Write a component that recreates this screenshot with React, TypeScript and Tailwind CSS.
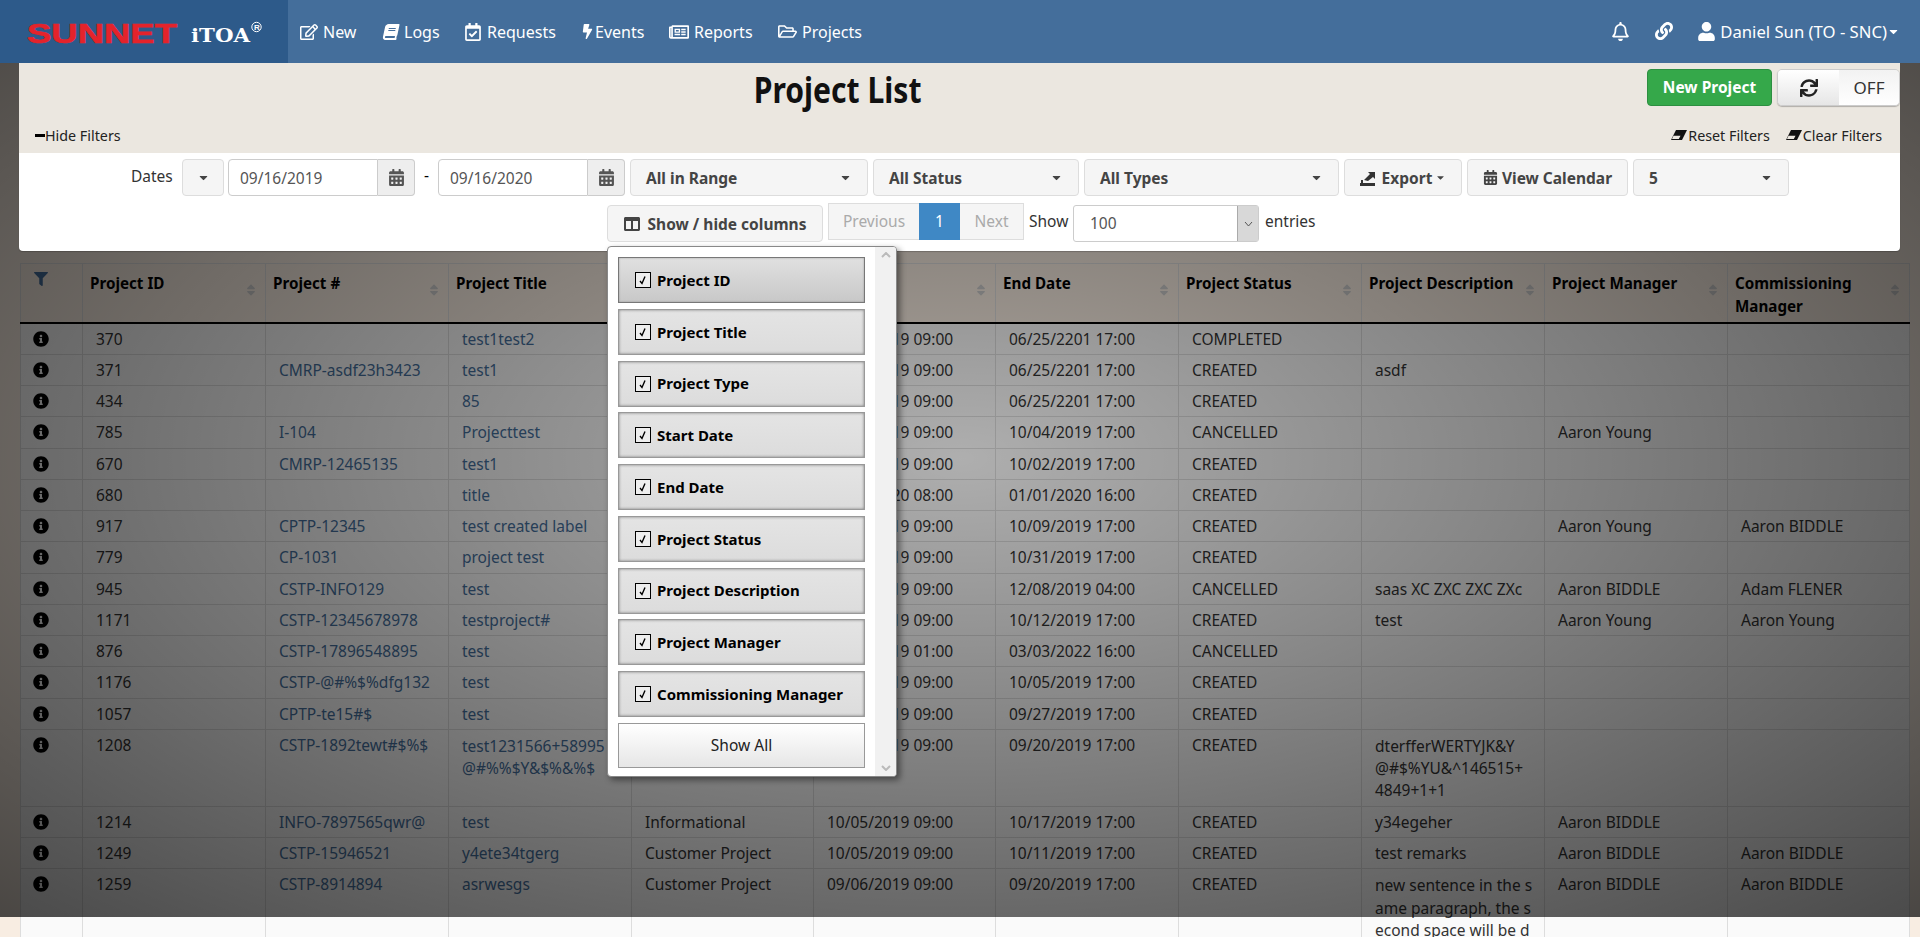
import React from 'react';
import {
  FaBolt, FaBook, FaCalendarAlt, FaCaretDown, FaColumns, FaFilter, FaInfoCircle, FaLink,
  FaRegBell, FaRegCalendarCheck, FaRegEdit, FaRegFolderOpen, FaRegNewspaper, FaSort, FaSync, FaUser,
} from 'react-icons/fa';

const navItems = [
  { label: 'New', width: 'w-[83px]', box: 'w-[23px]', icon: <FaRegEdit className="text-[18px]" /> },
  { label: 'Logs', width: 'w-[81px]', box: 'w-[21px]', icon: <FaBook className="text-[16px] -skew-x-12" /> },
  { label: 'Requests', width: 'w-[116px]', box: 'w-[23px]', icon: <FaRegCalendarCheck className="text-[18px]" /> },
  { label: 'Events', width: 'w-[89px]', box: 'w-[15px]', icon: <FaBolt className="text-[15px]" /> },
  { label: 'Reports', width: 'w-[109px]', box: 'w-[25px]', icon: <FaRegNewspaper className="text-[20px]" /> },
  { label: 'Projects', width: 'w-[90px]', box: 'w-[24px]', icon: <FaRegFolderOpen className="text-[19px]" /> },
];

const columns = [
  'Project ID',
  'Project Title',
  'Project Type',
  'Start Date',
  'End Date',
  'Project Status',
  'Project Description',
  'Project Manager',
  'Commissioning Manager',
];

const headers = ['Project ID', 'Project #', 'Project Title', 'Project Type', 'Start Date', 'End Date', 'Project Status', 'Project Description', 'Project Manager', 'Commissioning Manager'];
const colWidths = ['w-[62px]', 'w-[183px]', 'w-[183px]', 'w-[183px]', 'w-[182px]', 'w-[182px]', 'w-[183px]', 'w-[183px]', 'w-[183px]', 'w-[183px]', 'w-[182px]'];

// id, number, title, type, start, end, status, description, manager, commissioning
const rows = [
  ['370', '', 'test1test2', 'Customer Project', '10/05/2019 09:00', '06/25/2201 17:00', 'COMPLETED', '', '', ''],
  ['371', 'CMRP-asdf23h3423', 'test1', 'Customer Project', '10/05/2019 09:00', '06/25/2201 17:00', 'CREATED', 'asdf', '', ''],
  ['434', '', '85', 'Customer Project', '10/05/2019 09:00', '06/25/2201 17:00', 'CREATED', '', '', ''],
  ['785', 'I-104', 'Projecttest', 'Customer Project', '10/03/2019 09:00', '10/04/2019 17:00', 'CANCELLED', '', 'Aaron Young', ''],
  ['670', 'CMRP-12465135', 'test1', 'Customer Project', '10/01/2019 09:00', '10/02/2019 17:00', 'CREATED', '', '', ''],
  ['680', '', 'title', 'Customer Project', '01/01/2020 08:00', '01/01/2020 16:00', 'CREATED', '', '', ''],
  ['917', 'CPTP-12345', 'test created label', 'Customer Project', '10/05/2019 09:00', '10/09/2019 17:00', 'CREATED', '', 'Aaron Young', 'Aaron BIDDLE'],
  ['779', 'CP-1031', 'project test', 'Customer Project', '10/05/2019 09:00', '10/31/2019 17:00', 'CREATED', '', '', ''],
  ['945', 'CSTP-INFO129', 'test', 'Customer Project', '10/05/2019 09:00', '12/08/2019 04:00', 'CANCELLED', 'saas XC ZXC ZXC ZXc', 'Aaron BIDDLE', 'Adam FLENER'],
  ['1171', 'CSTP-12345678978', 'testproject#', 'Customer Project', '10/05/2019 09:00', '10/12/2019 17:00', 'CREATED', 'test', 'Aaron Young', 'Aaron Young'],
  ['876', 'CSTP-17896548895', 'test', 'Customer Project', '10/05/2019 01:00', '03/03/2022 16:00', 'CANCELLED', '', '', ''],
  ['1176', 'CSTP-@#%$%dfg132', 'test', 'Customer Project', '10/05/2019 09:00', '10/05/2019 17:00', 'CREATED', '', '', ''],
  ['1057', 'CPTP-te15#$', 'test', 'Customer Project', '09/05/2019 09:00', '09/27/2019 17:00', 'CREATED', '', '', ''],
  ['1208', 'CSTP-1892tewt#$%$', 'test1231566+58995\n@#%%$Y&$%&%$', 'Customer Project', '09/06/2019 09:00', '09/20/2019 17:00', 'CREATED', 'dterfferWERTYJK&Y\n@#$%YU&^146515+\n4849+1+1', '', ''],
  ['1214', 'INFO-7897565qwr@', 'test', 'Informational', '10/05/2019 09:00', '10/17/2019 17:00', 'CREATED', 'y34egeher', 'Aaron BIDDLE', ''],
  ['1249', 'CSTP-15946521', 'y4ete34tgerg', 'Customer Project', '10/05/2019 09:00', '10/11/2019 17:00', 'CREATED', 'test remarks', 'Aaron BIDDLE', 'Aaron BIDDLE'],
  ['1259', 'CSTP-8914894', 'asrwesgs', 'Customer Project', '09/06/2019 09:00', '09/20/2019 17:00', 'CREATED', 'new sentence in the s\name paragraph, the s\necond space will be d', 'Aaron BIDDLE', 'Aaron BIDDLE'],
];

const Logo = () => (
  <svg width="288" height="63" viewBox="0 0 288 63">
    <text x="27" y="43" textLength="150" lengthAdjust="spacingAndGlyphs" fontFamily="'Liberation Sans', sans-serif" fontWeight="700" fontSize="27" fill="#e4232b" stroke="#e4232b" strokeWidth="0.6">
      SUNNET
    </text>
    <text x="191" y="42" textLength="59" lengthAdjust="spacingAndGlyphs" fontFamily="'DejaVu Serif', serif" fontWeight="700" fontSize="19" fill="#ffffff">
      iTOA
    </text>
    <circle cx="256.5" cy="27" r="4.7" fill="none" stroke="#ffffff" strokeWidth="1" />
    <text x="254" y="30" fontFamily="'Liberation Sans', sans-serif" fontWeight="700" fontSize="8" fill="#ffffff">
      R
    </text>
  </svg>
);

const ExportIcon = () => (
  <svg width="16" height="17" viewBox="0 0 16 17" fill="#333">
    <path d="M0 14h15v3H0z" />
    <path d="M1 11h2v3H1z" />
    <path d="M4 11l6-6-2-2h7v7l-2-2-5 4z" />
  </svg>
);

const EraserIcon = () => (
  <svg width="16" height="10" viewBox="0 0 16 10" className="shrink-0">
    <path d="M5 0h11l-5 10H0z" fill="#111" />
    <path d="M2.500 5.800h7L7.800 9H1z" fill="#ebe7e0" />
  </svg>
);

const SelectButton = ({ label, className }: { label: string; className: string }) => (
  <div className={`h-[37px] flex items-center justify-between pl-[15px] pr-[15px] bg-[#f5f5f5] border border-[#ddd] rounded-[4px] font-bold text-[#444] ${className}`}>
    <span className="pt-[2px]">{label}</span>
    <FaCaretDown className="text-[13px] text-[#444]" />
  </div>
);

const DateInput = ({ value }: { value: string }) => (
  <div className="flex h-[37px]">
    <div className="w-[150px] pl-[11px] flex items-center bg-white border border-[#ccc] rounded-l-[4px] text-[#555]">
      <span className="pt-[2px]">{value}</span>
    </div>
    <div className="w-[37px] flex items-center justify-center bg-[#eee] border border-l-0 border-[#ccc] rounded-r-[4px] text-[#555]">
      <FaCalendarAlt className="text-[17px]" />
    </div>
  </div>
);

const Filters = () => (
  <div className="bg-white rounded-b-[4px] shadow-[0_1px_1px_rgba(0,0,0,0.2)] h-[98px] pt-[6px] text-[15.500px]">
    <div className="flex items-center h-[37px] gap-[5px] pl-[112px]">
      <span className="w-[40px] mr-[6px] -mt-[2px] text-[#333]">Dates</span>
      <div className="w-[42px] h-[37px] -mr-px flex items-center justify-center bg-[#f5f5f5] border border-[#ddd] rounded-[4px]">
        <FaCaretDown className="text-[13px] text-[#444]" />
      </div>
      <DateInput value="09/16/2019" />
      <span className="w-[13px] text-center -mt-[3px]">-</span>
      <DateInput value="09/16/2020" />
      <SelectButton label="All in Range" className="w-[238px]" />
      <SelectButton label="All Status" className="w-[206px]" />
      <SelectButton label="All Types" className="w-[255px]" />
      <div className="w-[118px] h-[37px] flex items-center justify-center gap-[6px] bg-[#f5f5f5] border border-[#ddd] rounded-[4px] font-bold text-[#444]">
        <ExportIcon />
        <span className="pt-[2px]">Export</span>
        <FaCaretDown className="text-[11px] -ml-[3px]" />
      </div>
      <div className="w-[161px] h-[37px] flex items-center justify-center gap-[4px] bg-[#f5f5f5] border border-[#ddd] rounded-[4px] font-bold text-[#444]">
        <FaCalendarAlt className="text-[15px]" />
        <span className="pt-[2px]">View Calendar</span>
      </div>
      <SelectButton label="5" className="w-[156px]" />
    </div>
    <div className="flex items-start mt-[9px] h-[38px] gap-[5px] pl-[588px]">
      <div className="w-[216px] h-[37px] flex items-center justify-center gap-[8px] bg-[#f5f5f5] border border-[#ddd] rounded-[4px] font-bold text-[#444]">
        <FaColumns className="text-[16px]" />
        <span className="pt-[2px]">Show / hide columns</span>
      </div>
      <div className="flex h-[37px] -mt-[2px] text-[#aaa]">
        <div className="w-[91px] flex items-center justify-center bg-[#f5f5f5] border border-r-0 border-[#ddd]">Previous</div>
        <div className="w-[41px] flex items-center justify-center bg-[#3f88c5] text-white">1</div>
        <div className="w-[64px] flex items-center justify-center bg-[#f5f5f5] border border-l-0 border-[#ddd]">Next</div>
      </div>
      <div className="w-[39px] h-[37px] -mt-[2px] flex items-center text-[#333]">Show</div>
      <div className="flex h-[37px] w-[186px] bg-white border border-[#ccc] rounded-[3px]">
        <div className="flex-1 pl-[16px] flex items-center text-[#555]">100</div>
        <div className="w-[21px] flex items-center justify-center bg-[#d8d8d8] border-l border-[#aaa] text-[#555]">
          <svg width="9" height="6" viewBox="0 0 9 6" fill="none" stroke="#555"><path d="M1 1l3.500 4L8 1" /></svg>
        </div>
      </div>
      <div className="h-[37px] -mt-[2px] flex items-center ml-[1px] text-[#333]">entries</div>
    </div>
  </div>
);

const ColumnMenu = () => (
  <div className="absolute z-30 left-[607px] top-[246px] w-[290px] h-[531px] bg-white border border-[#888] rounded-[4px] shadow-[3px_3px_6px_rgba(0,0,0,0.45)] flex overflow-hidden">
    <div className="flex-1 pl-[10px] pt-[10px] flex flex-col gap-[5.750px]">
      {columns.map((name, i) => (
        <div
          key={name}
          className={
            i === 0
              ? 'h-[46px] w-[247px] shrink-0 flex items-center pl-4 gap-[6px] border border-[#777] bg-[linear-gradient(to_bottom,#e0e0e0,#c8c8c8)] shadow-[inset_0_0_2px_rgba(0,0,0,0.3)]'
              : 'h-[46px] w-[247px] shrink-0 flex items-center pl-4 gap-[6px] border border-[#999] bg-[linear-gradient(to_bottom,#e4e4e4,#dcdcdc)] shadow-[inset_0_0_3px_rgba(0,0,0,0.45)]'
          }
        >
          <span className="w-4 h-4 border border-black bg-[#eee] flex items-center justify-center">
            <svg width="10" height="10" viewBox="0 0 10 10" fill="none" stroke="#000" strokeWidth="1.400"><path d="M2 6l2 2.500L7 1.500" /></svg>
          </span>
          <span className="font-bold text-[15px] text-black">{name}</span>
        </div>
      ))}
      <div className="h-[45px] w-[247px] shrink-0 flex items-center justify-center border border-[#999] bg-[linear-gradient(to_bottom,#ffffff,#e6e6e6)] text-[#222] text-[15.500px]">
        Show All
      </div>
    </div>
    <div className="w-[21px] bg-[#f1f1f1] flex flex-col items-center justify-between py-[5px]">
      <svg width="10" height="6" viewBox="0 0 10 6" fill="none" stroke="#bbb" strokeWidth="2"><path d="M1 5l4-4 4 4" /></svg>
      <svg width="10" height="6" viewBox="0 0 10 6" fill="none" stroke="#bbb" strokeWidth="2"><path d="M1 1l4 4 4-4" /></svg>
    </div>
  </div>
);

const ProjectTable = () => (
  <table className="table-fixed border-collapse w-[1889px] ml-[20px] mt-[12px] text-[15.500px] text-[#333]">
    <colgroup>
      {colWidths.map((w, i) => (
        <col key={i} className={w} />
      ))}
    </colgroup>
    <thead>
      <tr className="h-[59px] border-t border-[#ddd] leading-[23px]">
        <th className="border-l border-r border-[#ddd] border-b-2 border-b-black align-top pt-[8px] pl-[13px] text-left">
          <FaFilter className="text-[14px] text-[#446e9b]" />
        </th>
        {headers.map((h) => (
          <th key={h} className={`relative border-r border-[#ddd] border-b-2 border-b-black align-top pt-[8px] pl-[7px] pr-6 text-left text-[15.200px] font-bold text-black ${h === 'Start Date' ? 'tracking-[-0.5px]' : ''}`}>
            {h}
            <FaSort className="absolute right-[7px] top-[19px] text-[14px] text-[#ccc]" />
          </th>
        ))}
      </tr>
    </thead>
    <tbody>
      {rows.map((r) => (
        <tr key={r[0]} className="bg-[#fafafa]">
          <td className="border border-[#ddd] align-top pt-[7px] pl-[12px]">
            <FaInfoCircle className="text-[16px] text-black" />
          </td>
          {r.map((cell, i) => (
            <td
              key={i}
              className={`border border-[#ddd] align-top pt-[5px] pb-[4.250px] pl-[13px] pr-1 whitespace-pre-line ${cell.includes('\n') ? 'leading-[22.300px]' : 'leading-[21px]'} ${i === 1 || i === 2 ? 'text-[#446e9b]' : ''}`}
            >
              {cell}
            </td>
          ))}
        </tr>
      ))}
    </tbody>
  </table>
);

export default function App() {
  return (
    <div className="relative h-screen overflow-hidden bg-[#f8ede2] font-['Noto_Sans',sans-serif] text-[15.500px]">
      {/* page dimmed while the column menu is open */}
      <div className="absolute left-0 top-0 w-full h-[917px] z-10 bg-[radial-gradient(ellipse_farthest-corner_at_center,rgba(0,0,0,0.3)_0%,rgba(0,0,0,0.7)_100%)]" />

      <nav className="relative z-20 h-[63px] flex items-center bg-[#446e9b] text-white text-[16px]">
        <div className="w-[288px] h-full bg-[#2d5a8a] shrink-0">
          <Logo />
        </div>
        <div className="flex items-center pl-3">
          {navItems.map((item) => (
            <div key={item.label} className={`flex items-center ${item.width}`}>
              <span className={item.box}>{item.icon}</span>
              <span>{item.label}</span>
            </div>
          ))}
        </div>
        <div className="ml-auto flex items-center pr-[20px] text-[16.700px]">
          <FaRegBell className="text-[19px] mr-[25px]" />
          <FaLink className="text-[18px] mr-[24px]" />
          <FaUser className="text-[19px] mr-[4px]" />
          <span>Daniel Sun (TO - SNC)</span>
          <FaCaretDown className="text-[13px]" />
        </div>
      </nav>

      <div className="relative z-20 ml-[19px] w-[1881px]">
        <div className="h-[90px] bg-[#ebe7e0] flex flex-col justify-between text-[#222]">
          <div className="flex">
            <h1 className="flex-1 text-center pl-[20px] text-[35px] leading-[44px] font-bold text-[#111] pt-[5px] scale-x-[0.86]">Project List</h1>
            <div className="w-[261px] flex justify-end gap-[5px] pt-[6px]">
              <div className="w-[125px] h-[37px] flex items-center justify-center bg-[#35a84a] border border-[#2d8f41] rounded-[4px] text-white font-bold">
                New Project
              </div>
              <div className="w-[123px] h-[37px] flex border border-[#ccc] rounded-[5px] overflow-hidden shadow-[0_1px_1px_rgba(0,0,0,0.25)]">
                <div className="w-[61px] flex items-center justify-center bg-[linear-gradient(to_bottom,#ffffff,#e6e6e6)] text-[#222]">
                  <FaSync className="text-[18px]" />
                </div>
                <div className="flex-1 flex items-center justify-center bg-[linear-gradient(to_bottom,#f2f2f2,#ffffff)] text-[#333] text-[17px]">OFF</div>
              </div>
            </div>
          </div>
          <div className="flex justify-between items-center pb-[7px] pl-4 pr-[18px] text-[14.300px]">
            <div className="flex items-center">
              <div className="w-[10px] h-[3px] bg-black" />
              <span>Hide Filters</span>
            </div>
            <div className="flex items-center gap-4">
              <div className="flex items-center gap-[1px]">
                <EraserIcon />
                <span>Reset Filters</span>
              </div>
              <div className="flex items-center gap-[1px]">
                <EraserIcon />
                <span>Clear Filters</span>
              </div>
            </div>
          </div>
        </div>
        <Filters />
      </div>

      <ProjectTable />
      <ColumnMenu />
    </div>
  );
}
